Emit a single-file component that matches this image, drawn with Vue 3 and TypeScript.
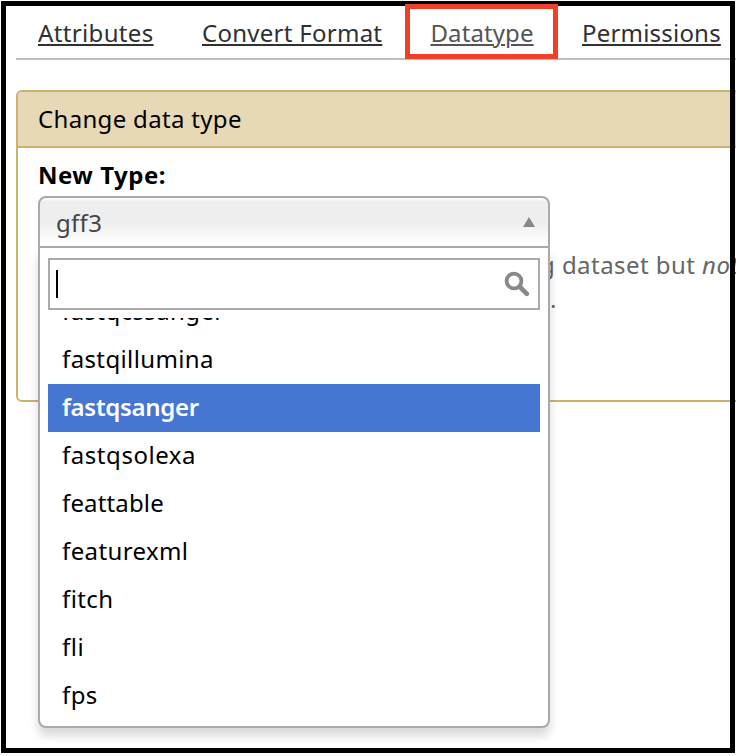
<script setup lang="ts">
import { ref } from 'vue'

interface Tab { label: string; cls: string }
interface Option { label: string; cls: string }

const tabs: Tab[] = [
  { label: 'Attributes', cls: 'attributes' },
  { label: 'Convert Format', cls: 'convert' },
  { label: 'Datatype', cls: 'datatype' },
  { label: 'Permissions', cls: 'permissions' },
]

const options: Option[] = [
  { label: 'fastqcssanger', cls: 'medium' },
  { label: 'fastqillumina', cls: 'medium' },
  { label: 'fastqsanger', cls: 'bold' },
  { label: 'fastqsolexa', cls: 'wide' },
  { label: 'feattable', cls: 'tight' },
  { label: 'featurexml', cls: 'medium' },
  { label: 'fitch', cls: 'medium' },
  { label: 'fli', cls: 'wide' },
  { label: 'fps', cls: 'medium' },
]

const highlighted = ref('fastqsanger')
</script>

<template>
  <div class="page">
    <nav class="tabs">
      <a v-for="tab in tabs" :key="tab.label" :class="['tab', tab.cls]">{{ tab.label }}</a>
    </nav>

    <section class="panel">
      <header class="panel-title">Change data type</header>
      <div class="panel-body">
        <label class="field-label">New Type:</label>
        <div class="select">
          <div class="choice">
            <span class="value">gff3</span>
            <svg class="arrow" width="12" height="10" viewBox="0 0 12 10"><path d="M6 0L12 10H0Z" /></svg>
          </div>
          <div class="drop">
            <div class="search">
              <span class="caret"></span>
              <svg class="magnifier" width="26" height="26" viewBox="0 0 26 26">
                <circle cx="10" cy="10" r="7.4" />
                <path d="M16 16L22.8 22.8" />
              </svg>
            </div>
            <ul class="options">
              <li
                v-for="option in options"
                :key="option.label"
                :class="['option', option.cls, { active: option.label === highlighted }]"
                @mouseenter="highlighted = option.label"
              >{{ option.label }}</li>
            </ul>
          </div>
        </div>
        <p class="help">g dataset but <em>not</em><br><span class="stop">.</span></p>
      </div>
    </section>

    <div class="frame"></div>
    <div class="marker"></div>
  </div>
</template>

<style>
body {
  margin: 0;
  background: #fff;
}
</style>

<style scoped>
.page {
  position: relative;
  box-sizing: border-box;
  width: 736px;
  height: 756px;
  padding-left: 16px;
  overflow: hidden;
  background: #fff;
  color: #000;
  font: 24px/34px "Noto Sans", "Open Sans", sans-serif;
}
.tabs {
  display: flex;
  box-sizing: border-box;
  height: 60px;
  padding: 16px 0 0 22px;
  border-bottom: 2px solid #bfbfbf;
  white-space: nowrap;
}
.tab {
  flex: none;
  color: #303133;
  text-decoration: underline;
  text-decoration-thickness: 2px;
  text-underline-offset: 2px;
}
.attributes { width: 164px; letter-spacing: 0.35px; }
.convert { width: 228.5px; letter-spacing: 0.27px; }
.datatype { width: 151.5px; letter-spacing: 0.1px; color: #555; }
.permissions { letter-spacing: 0.2px; }
.panel {
  box-sizing: border-box;
  width: 740px;
  height: 312px;
  margin-top: 30px;
  border: 2px solid #ceb26b;
  border-radius: 6px;
}
.panel-title {
  box-sizing: border-box;
  height: 56px;
  padding: 10px 20px;
  border-bottom: 2px solid #ceb26b;
  border-radius: 4px 0 0;
  background: #e7d9b6;
  letter-spacing: 0.32px;
}
.panel-body {
  padding: 10px 20px 0;
}
.field-label {
  display: block;
  height: 38px;
  font-weight: 700;
  letter-spacing: 0.5px;
}
.select {
  position: relative;
  z-index: 1;
  width: 512px;
  height: 52px;
}
.choice {
  display: flex;
  align-items: center;
  justify-content: space-between;
  box-sizing: border-box;
  height: 52px;
  padding: 1px 13px 0 16px;
  border: 2px solid #aaa;
  border-radius: 8px 8px 0 0;
  background: linear-gradient(#fff 0, #eee 4px, #eee 50%, #fff 95%);
  color: #444;
}
.value {
  letter-spacing: 0.3px;
}
.arrow {
  margin-bottom: 2px;
  fill: #888;
}
.drop {
  position: absolute;
  top: 52px;
  left: 0;
  box-sizing: border-box;
  width: 512px;
  height: 480px;
  padding: 10px 8px 8px;
  border: 2px solid #aaa;
  border-top: 0;
  border-radius: 0 0 8px 8px;
  background: #fff;
  box-shadow: 0 8px 10px rgba(0, 0, 0, 0.15);
}
.search {
  display: flex;
  align-items: center;
  justify-content: space-between;
  box-sizing: border-box;
  height: 52px;
  padding: 0 8px 0 6px;
  border: 2px solid #aaa;
}
.caret {
  width: 2px;
  height: 28px;
  background: #000;
}
.magnifier {
  fill: none;
  stroke: #888;
  stroke-width: 3.8;
}
.magnifier path {
  stroke-width: 4.6;
  stroke-linecap: round;
}
.options {
  display: flex;
  flex-direction: column;
  justify-content: flex-end;
  height: 402px;
  margin: 8px 0 0;
  padding: 0;
  overflow: hidden;
  list-style: none;
}
.option {
  flex: none;
  box-sizing: border-box;
  height: 48px;
  padding: 6px 14px 8px;
}
.wide { letter-spacing: 0.55px; }
.medium { letter-spacing: 0.38px; }
.tight { letter-spacing: 0.15px; }
.bold { font-weight: 600; letter-spacing: -0.3px; }
.active {
  background: #4676d2;
  color: #fff;
}
.help {
  margin: 0 0 0 502px;
  color: #666;
  white-space: nowrap;
  letter-spacing: 0.45px;
}
.stop {
  margin-left: 10px;
}
.frame {
  position: absolute;
  z-index: 2;
  inset: 1px 1px 3px;
  border: 5px solid #000;
  pointer-events: none;
}
.marker {
  position: absolute;
  z-index: 3;
  top: 4px;
  left: 405px;
  box-sizing: border-box;
  width: 153px;
  height: 55px;
  border: 5px solid #ef4128;
  pointer-events: none;
}
</style>
